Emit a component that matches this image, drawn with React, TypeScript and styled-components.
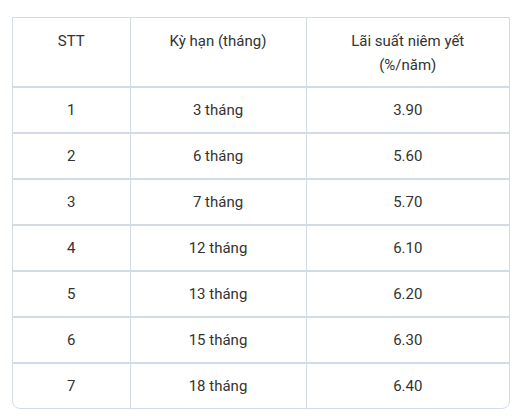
import React from "react";
import styled, { createGlobalStyle } from "styled-components";

const GlobalStyle = createGlobalStyle`
	body {
		margin: 0;
		background: #ffffff;
		font-family: Roboto, "Liberation Sans", sans-serif;
	}
`;

const Page = styled.div`
	padding: 17px 16px 0 12px;
`;

const TableWrap = styled.div`
	width: 498px;
	box-sizing: border-box;
	border: 1px solid #d3dbe7;
	border-radius: 0 0 8px 8px;
	overflow: hidden;
`;

const Table = styled.table`
	width: 100%;
	border-collapse: collapse;
	table-layout: fixed;
	color: #333333;
	font-size: 15px;
	line-height: 24px;
`;

const Cell = styled.td<{ $head?: boolean }>`
	text-align: center;
	vertical-align: ${(p) => (p.$head ? "top" : "middle")};
	padding: ${(p) => (p.$head ? "11px 8px 9px" : "10px 8px")};
	border-bottom: 2px solid #d3dbe7;
	border-left: 1px solid #d3dbe7;
	font-weight: 400;

	&:first-child {
		border-left: none;
	}

	tbody tr:last-child > & {
		border-bottom: none;
	}
`;

const rates = [
	{ no: 1, term: "3 tháng", rate: "3.90" },
	{ no: 2, term: "6 tháng", rate: "5.60" },
	{ no: 3, term: "7 tháng", rate: "5.70" },
	{ no: 4, term: "12 tháng", rate: "6.10" },
	{ no: 5, term: "13 tháng", rate: "6.20" },
	{ no: 6, term: "15 tháng", rate: "6.30" },
	{ no: 7, term: "18 tháng", rate: "6.40" },
];

const App = () => {
	return (
		<Page>
			<GlobalStyle />
			<TableWrap>
				<Table>
					<colgroup>
						<col style={{ width: 117 }} />
						<col style={{ width: 176 }} />
						<col />
					</colgroup>
					<thead>
						<tr>
							<Cell as="th" $head>STT</Cell>
							<Cell as="th" $head>Kỳ hạn (tháng)</Cell>
							<Cell as="th" $head>
								Lãi suất niêm yết
								<br />
								(%/năm)
							</Cell>
						</tr>
					</thead>
					<tbody>
						{rates.map((r) => (
							<tr key={r.no}>
								<Cell>{r.no}</Cell>
								<Cell>{r.term}</Cell>
								<Cell>{r.rate}</Cell>
							</tr>
						))}
					</tbody>
				</Table>
			</TableWrap>
		</Page>
	);
};

export default App;
